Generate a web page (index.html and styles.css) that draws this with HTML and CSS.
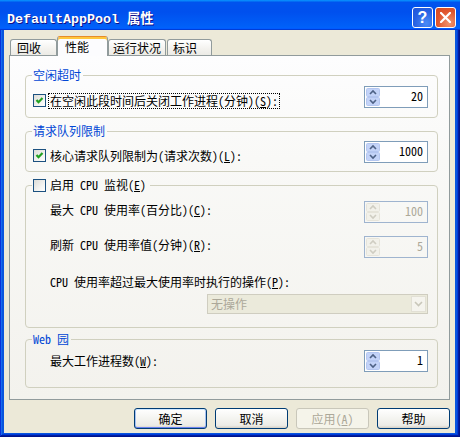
FILE: index.html
```html
<!DOCTYPE html>
<html lang="zh-CN">
<head>
<meta charset="utf-8">
<title>DefaultAppPool 属性</title>
<link rel="stylesheet" href="styles.css">
</head>
<body>
<div class="window">
  <div class="titlebar">
    <span class="title">DefaultAppPool 属性</span>
    <div class="tb-btns">
      <span class="tb-btn help">?</span>
      <span class="tb-btn close"><svg width="11" height="11" viewBox="0 0 11 11"><path d="M1 1 10 10M10 1 1 10" stroke="#fff" stroke-width="2.2" stroke-linecap="square"/></svg></span>
    </div>
  </div>
  <div class="client">
    <div class="tabs">
      <div class="tab t1">回收</div>
      <div class="tab t2 active">性能</div>
      <div class="tab t3">运行状况</div>
      <div class="tab t4">标识</div>
    </div>
    <div class="panel">
      <fieldset class="group g1">
        <legend class="glabel">空闲超时</legend>
        <div class="row">
          <label class="check">
            <span class="box"><svg width="11" height="11" viewBox="0 0 11 11"><path d="M2.5 5 4.5 7.2 8.5 3" fill="none" stroke="#21A121" stroke-width="2.2"/></svg></span>
            <span class="ctext focus">在空闲此段时间后关闭工作进程(分钟)(<u>S</u>):</span>
          </label>
          <div class="spin">
            <svg class="sb" width="14" height="18" viewBox="0 0 14 18"><rect x="0.5" y="0.5" width="13" height="8" rx="1"/><rect x="0.5" y="9.5" width="13" height="8" rx="1"/><path d="M4 6 7 3 10 6"/><path d="M4 12 7 15 10 12"/></svg>
            <span class="val">20</span>
          </div>
        </div>
      </fieldset>

      <fieldset class="group g2">
        <legend class="glabel">请求队列限制</legend>
        <div class="row">
          <label class="check">
            <span class="box"><svg width="11" height="11" viewBox="0 0 11 11"><path d="M2.5 5 4.5 7.2 8.5 3" fill="none" stroke="#21A121" stroke-width="2.2"/></svg></span>
            <span class="ctext">核心请求队列限制为(请求次数)(<u>L</u>):</span>
          </label>
          <div class="spin">
            <svg class="sb" width="14" height="18" viewBox="0 0 14 18"><rect x="0.5" y="0.5" width="13" height="8" rx="1"/><rect x="0.5" y="9.5" width="13" height="8" rx="1"/><path d="M4 6 7 3 10 6"/><path d="M4 12 7 15 10 12"/></svg>
            <span class="val">1000</span>
          </div>
        </div>
      </fieldset>

      <fieldset class="group g3">
        <legend class="clegend">
          <span class="box"></span>
          <span class="ctext">启用 CPU 监视(<u>E</u>)</span>
        </legend>
        <div class="cbody">
          <div class="crow">
            <span class="lbl up">最大 CPU 使用率(百分比)(<u>C</u>):</span>
            <div class="spin dis">
              <svg class="sb" width="14" height="18" viewBox="0 0 14 18"><rect x="0.5" y="0.5" width="13" height="8" rx="1"/><rect x="0.5" y="9.5" width="13" height="8" rx="1"/><path d="M4 6 7 3 10 6"/><path d="M4 12 7 15 10 12"/></svg>
              <span class="val">100</span>
            </div>
          </div>
          <div class="crow r2">
            <span class="lbl up">刷新 CPU 使用率值(分钟)(<u>R</u>):</span>
            <div class="spin dis">
              <svg class="sb" width="14" height="18" viewBox="0 0 14 18"><rect x="0.5" y="0.5" width="13" height="8" rx="1"/><rect x="0.5" y="9.5" width="13" height="8" rx="1"/><path d="M4 6 7 3 10 6"/><path d="M4 12 7 15 10 12"/></svg>
              <span class="val">5</span>
            </div>
          </div>
          <div class="line">CPU 使用率超过最大使用率时执行的操作(<u>P</u>):</div>
          <div class="combo">
            <span class="ctxt">无操作</span>
            <span class="cbtn"><svg width="9" height="6" viewBox="0 0 9 6"><path d="M1 1 4.5 4.5 8 1" fill="none" stroke="#C9C7BA" stroke-width="1.6"/></svg></span>
          </div>
        </div>
      </fieldset>

      <fieldset class="group g4">
        <legend class="glabel">Web 园</legend>
        <div class="crow wrow">
          <span class="lbl">最大工作进程数(<u>W</u>):</span>
          <div class="spin">
            <svg class="sb" width="14" height="18" viewBox="0 0 14 18"><rect x="0.5" y="0.5" width="13" height="8" rx="1"/><rect x="0.5" y="9.5" width="13" height="8" rx="1"/><path d="M4 6 7 3 10 6"/><path d="M4 12 7 15 10 12"/></svg>
            <span class="val">1</span>
          </div>
        </div>
      </fieldset>
    </div>
    <div class="buttons">
      <span class="btn default">确定</span>
      <span class="btn">取消</span>
      <span class="btn disabled">应用(<u>A</u>)</span>
      <span class="btn">帮助</span>
    </div>
  </div>
</div>
</body>
</html>
```
FILE: styles.css
```css
html, body {
  margin: 0;
  padding: 0;
  background: #ECE9D8;
}
body {
  font-family: "Noto Sans Mono CJK SC", "Liberation Mono", "Noto Sans CJK SC", monospace;
  font-size: 12px;
  color: #000;
}
.window {
  width: 460px;
  height: 437px;
  display: flex;
  flex-direction: column;
  background: #0855DD;
  box-shadow: inset -1px -1px #00138C, inset 1px 1px #0831D9, inset -2px -2px #001EA0, inset 2px 2px #166AEE, inset -3px -3px #003BDA, inset 3px 3px #0855DD;
  overflow: hidden;
}
.titlebar {
  height: 30px;
  flex: none;
  box-sizing: border-box;
  display: flex;
  align-items: center;
  padding: 4px 4px 0 7px;
  background: linear-gradient(180deg, #0997FF, #0053EE 8%, #0050EE 40%, #0060F8 88%, #0062FC 93%, #005BFF 95%, #003DD7 96%, #003DD7);
}
.title {
  flex: 1;
  color: #fff;
  font-family: "Liberation Mono", "Noto Sans CJK SC", monospace;
  font-weight: bold;
  font-size: 13.33px;
  text-shadow: 1px 1px #0F1089;
  white-space: pre;
}
.tb-btns {
  display: flex;
  gap: 2px;
}
.tb-btn {
  width: 21px;
  height: 21px;
  box-sizing: border-box;
  border: 1px solid #fff;
  border-radius: 3px;
  display: flex;
  align-items: center;
  justify-content: center;
}
.help {
  background: radial-gradient(circle at 70% 80%, #4A8BF7, #2660E2 60%, #1E54D8);
  color: #fff;
  font-family: "Liberation Sans", sans-serif;
  font-weight: bold;
  font-size: 16px;
  line-height: 19px;
}
.close {
  background: radial-gradient(circle at 70% 80%, #F0936E, #E0552D 60%, #D24A22);
}
.client {
  flex: 1;
  margin: 0 5px 4px 4px;
  background: #ECE9D8;
  padding: 6px 5px 0;
  display: flex;
  flex-direction: column;
}
.tabs {
  display: flex;
  align-items: flex-end;
  height: 19px;
  margin-left: 1px;
  position: relative;
  z-index: 1;
}
.tab {
  height: 16px;
  box-sizing: border-box;
  border: 1px solid #919B9C;
  border-bottom: 0;
  border-radius: 3px 3px 0 0;
  background: linear-gradient(180deg, #FFFFFF, #F3F2EE 60%, #ECEBE6);
  line-height: 15px;
  white-space: nowrap;
}
.t1 { width: 47px; padding-left: 6px; }
.t2 { width: 51px; padding-left: 7px; }
.t3 { width: 58px; padding-left: 4px; }
.t4 { width: 45px; padding-left: 5px; margin-left: 1px; }
.tab.active {
  height: 20px;
  margin-bottom: -1px;
  background: #FCFCFE;
  border-top-color: #E68B2C;
  box-shadow: inset 0 2px #FFC73C;
  padding-top: 2px;
  line-height: 15px;
}
.panel {
  height: 345px;
  box-sizing: border-box;
  border: 1px solid #919B9C;
  background: linear-gradient(180deg, #FDFDFE, #F9F9F7 30%, #F3F2ED);
  padding: 12px 11px 11px 15px;
  display: flex;
  flex-direction: column;
}
.group {
  margin: 0;
  padding: 0;
  min-inline-size: 0;
  border: 1px solid #D0D0BF;
  border-radius: 4px;
}
.g2, .g3 { margin-top: 6px; }
.g4 { margin-top: 4px; }
.glabel, .clegend {
  margin-left: 6px;
  padding: 0 2px 0 1px;
  height: 14px;
  line-height: 14px;
}
.glabel { color: #0046D5; }
.clegend {
  display: flex;
  align-items: center;
}
.row {
  display: flex;
  align-items: flex-end;
  justify-content: space-between;
  height: 22px;
  padding: 4px 9px 9px 7px;
}
.g2 .row { padding-top: 3px; padding-bottom: 8px; }
.check {
  display: flex;
  align-items: center;
}
.box {
  width: 13px;
  height: 13px;
  box-sizing: border-box;
  border: 1px solid #1C5180;
  background: linear-gradient(135deg, #DCDCD7, #F6F6F4 70%, #FFFFFF);
  display: flex;
}
.ctext {
  margin-left: 2px;
  padding: 0 1px;
  border: 1px solid transparent;
  line-height: 14px;
}
.check .ctext { margin-bottom: -1px; }
.focus { border: 1px dotted #000; }
.spin {
  width: 64px;
  height: 22px;
  flex: none;
  box-sizing: border-box;
  border: 1px solid #7F9DB9;
  background: #fff;
  display: flex;
  align-items: center;
}
.sb { margin-left: 1px; display: block; }
.sb rect { fill: #C3D3F8; stroke: #B4C6F0; }
.sb path { fill: none; stroke: #4D6185; stroke-width: 1.6; }
.val {
  flex: 1;
  text-align: right;
  padding-right: 4px;
  line-height: 14px;
  margin-top: -2px;
}
.spin.dis {
  background: transparent;
  border-color: #9FB4CF;
}
.spin.dis .sb rect { fill: #F2F1EA; stroke: #E6E4DA; }
.spin.dis .sb path { stroke: #CFCDC2; }
.spin.dis .val { color: #ACA899; }
.cbody {
  padding: 9px 9px 13px 24px;
  display: flex;
  flex-direction: column;
}
.crow {
  display: flex;
  align-items: center;
  justify-content: space-between;
  height: 22px;
}
.r2 { margin-top: 13px; }
.lbl { line-height: 14px; }
.lbl.up { margin-bottom: 5px; }
.line {
  margin-top: 17px;
  line-height: 14px;
}
.combo {
  margin-top: 5px;
  align-self: flex-end;
  width: 221px;
  height: 20px;
  box-sizing: border-box;
  border: 1px solid #CFCDC0;
  background: #EBEADB;
  display: flex;
  align-items: center;
}
.ctxt {
  flex: 1;
  padding-left: 3px;
  color: #ACA899;
  line-height: 14px;
}
.cbtn {
  width: 15px;
  height: 16px;
  margin-right: 1px;
  box-sizing: border-box;
  border: 1px solid #E2E0D5;
  background: #F5F4EE;
  display: flex;
  align-items: center;
  justify-content: center;
}
.wrow {
  padding: 4px 9px 15px 24px;
}
.buttons {
  display: flex;
  justify-content: flex-end;
  gap: 8px;
  margin-top: 8px;
}
.btn {
  width: 73px;
  height: 21px;
  box-sizing: border-box;
  border: 1px solid #003C74;
  border-radius: 3px;
  background: linear-gradient(180deg, #FFFFFF, #F4F4F0 50%, #ECEBE6 86%, #D6D0C5);
  display: flex;
  align-items: center;
  justify-content: center;
  line-height: 14px;
}
.btn.default {
  box-shadow: inset 0 1px #CEE7FF, inset 0 -1px #6982EE, inset 1px 0 #A6C1F2, inset -1px 0 #A6C1F2;
}
.btn.disabled {
  border-color: #C9C7BA;
  background: #F5F4EA;
  color: #ACA899;
}
```
